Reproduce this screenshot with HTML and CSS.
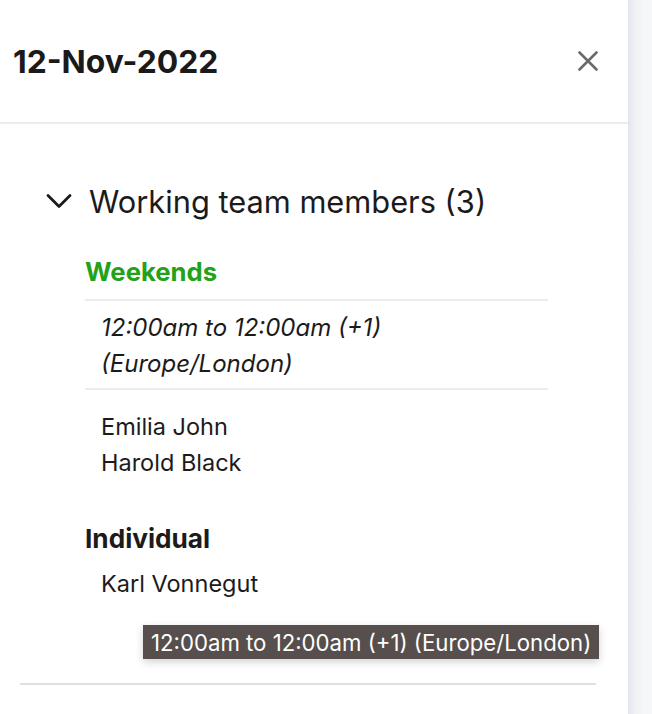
FILE: index.html
```html
<!DOCTYPE html>
<html>
<head>
<meta charset="utf-8">
<link rel="stylesheet" href="styles.css">
</head>
<body>
<div class="layout">
  <aside class="panel">
    <header class="panel-header">
      <h1 class="panel-title">12-Nov-2022</h1>
      <button class="close-btn" aria-label="Close">
        <svg width="20" height="20" viewBox="0 0 20 20"><path d="M1.5 1.5 L18.5 18.5 M18.5 1.5 L1.5 18.5" stroke="#6b6b6b" stroke-width="2.6" stroke-linecap="round" fill="none"/></svg>
      </button>
    </header>
    <div class="panel-body">
      <div class="section-toggle">
        <svg class="chevron" width="26" height="16" viewBox="0 0 26 16"><path d="M2 2.5 L13 13.5 L24 2.5" stroke="#1b1b1b" stroke-width="2.8" fill="none" stroke-linecap="round" stroke-linejoin="round"/></svg>
        <span class="section-title">Working team members (3)</span>
      </div>
      <div class="group">
        <div class="group-title green">Weekends</div>
        <div class="schedule">
          <div>12:00am to 12:00am (+1)</div>
          <div>(Europe/London)</div>
        </div>
        <ul class="names">
          <li>Emilia John</li>
          <li>Harold Black</li>
        </ul>
      </div>
      <div class="group individual">
        <div class="group-title">Individual</div>
        <ul class="names tight">
          <li>Karl Vonnegut</li>
        </ul>
        <div class="tooltip">12:00am to 12:00am (+1) (Europe/London)</div>
      </div>
      <div class="divider"></div>
    </div>
  </aside>
  <div class="backdrop"></div>
</div>
</body>
</html>
```
FILE: styles.css
```css
* { box-sizing: border-box; }
html, body { margin: 0; padding: 0; }
body {
  font-family: Inter, "Noto Sans", "Liberation Sans", sans-serif;
  color: #1b1b1b;
  background: #fff;
}
.layout {
  display: flex;
  height: 714px;
  overflow: hidden;
}
.panel {
  width: 628px;
  flex: none;
  background: #fff;
}
.backdrop {
  flex: 1;
  background: linear-gradient(to right, #e4e5ec 0px, #eff0f4 6px, #f6f7f9 16px);
}
.panel-header {
  height: 124px;
  display: flex;
  align-items: center;
  justify-content: space-between;
  padding: 0 30px 0 13px;
  border-bottom: 2px solid #e9edf2;
}
.panel-title {
  margin: 0;
  font-size: 31.8px;
  font-weight: 700;
  color: #1a1a1a;
}
.close-btn {
  border: 0;
  background: none;
  padding: 0;
  width: 20px;
  height: 20px;
  display: flex;
}
.panel-body {
  padding: 57px 0 0 0;
}
.section-toggle {
  display: flex;
  align-items: center;
  height: 40px;
  padding-left: 46px;
}
.chevron { margin-right: 17px; }
.section-title {
  font-size: 30.8px;
  font-weight: 400;
}
.group {
  margin-left: 85px;
  margin-right: 80px;
}
.section-toggle + .group { margin-top: 36px; }
.group-title {
  font-size: 25.7px;
  font-weight: 700;
  line-height: 30px;
}
.individual .group-title { font-size: 26.2px; }
.green { color: #21a219; }
.schedule {
  margin-top: 12px;
  border-top: 2px solid #e9edf2;
  border-bottom: 2px solid #e9edf2;
  padding: 9px 0 6px 16px;
  font-style: italic;
  font-size: 24px;
  line-height: 36px;
}
.names {
  list-style: none;
  margin: 0;
  padding: 19px 0 0 16px;
  font-size: 23.5px;
  line-height: 36px;
}
.names.tight { padding-top: 12px; }
.individual {
  position: relative;
  margin-top: 43px;
}
.tooltip {
  position: absolute;
  left: 58px;
  top: 101px;
  height: 34px;
  padding: 0 8px;
  display: flex;
  align-items: center;
  background: #564f4d;
  color: #fff;
  font-size: 22.2px;
  white-space: nowrap;
  box-shadow: 0 3px 8px rgba(0,0,0,0.18);
}
.divider {
  margin: 81px 32px 0 20px;
  border-top: 2px solid #e0e0e0;
}
```
